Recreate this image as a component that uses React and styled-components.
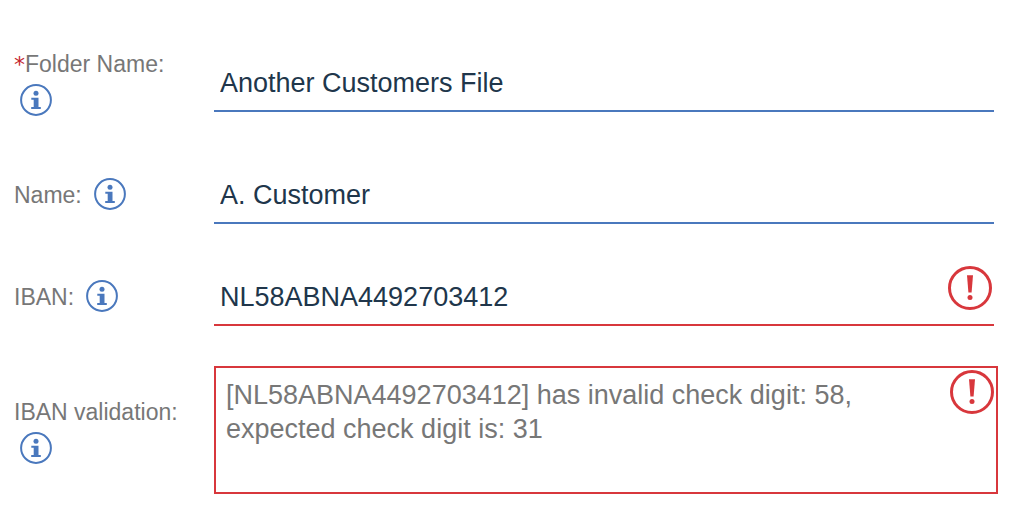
import React from "react";
import styled, { createGlobalStyle, css } from "styled-components";

const BLUE = "#4a78bd";
const RED = "#d8373c";

const GlobalStyle = createGlobalStyle`
  *, *::before, *::after { box-sizing: border-box; }
  body {
    margin: 0;
    background: #fff;
    font-family: "Helvetica Neue", "Liberation Sans", Arial, sans-serif;
  }
`;

const Form = styled.form`
  padding: 46px 34px 34px 14px;
`;

const Row = styled.div`
  display: grid;
  grid-template-columns: 200px 1fr;
  align-items: center;
  margin-bottom: ${(p) => p.$gap || 0}px;
`;

const LabelCell = styled.div`
  display: flex;
  flex-wrap: wrap;
  align-items: center;
  row-gap: 2px;
  padding: ${(p) => (p.$stacked ? "0 12px 2px 0" : "0 12px 0 0")};
`;

const Label = styled.label`
  padding: ${(p) => (p.$stacked ? "0 6px 0 0" : "2px 6px 0 0")};
  color: #777;
  font-size: 23px;
  line-height: 36px;
  white-space: nowrap;
`;

const Required = styled.span`
  color: #c4262e;
  font-family: "DejaVu Sans", sans-serif;
  font-size: 22px;
  line-height: 1;
`;

const InfoButton = styled.button`
  width: 32px;
  height: 32px;
  margin: 0 6px;
  padding: 0;
  border: 0;
  background: none;
  cursor: pointer;

  svg { display: block; }
`;

const Control = styled.div`
  position: relative;
  margin-right: ${(p) => (p.$wide ? 0 : 4)}px;
`;

const fieldText = css`
  display: block;
  width: 100%;
  margin: 0;
  border-radius: 0;
  outline: 0;
  background: transparent;
  font-family: inherit;
  font-size: 27px;
`;

const TextInput = styled.input`
  ${fieldText}
  height: 60px;
  padding: 4px 6px 0;
  border: 0;
  border-bottom: 2px solid ${(p) => (p.$invalid ? RED : BLUE)};
  color: #20364b;
`;

const Message = styled.textarea`
  ${fieldText}
  height: 128px;
  padding: 10px 56px 10px 10px;
  border: 2px solid ${RED};
  color: #777;
  line-height: 34px;
  resize: none;
  overflow: hidden;
`;

const ErrorMark = styled.svg`
  position: absolute;
  top: ${(p) => (p.$inset ? 4 : 0)}px;
  right: ${(p) => (p.$inset ? 4 : 2)}px;
  width: 44px;
  height: 44px;
  pointer-events: none;
`;

function Info({ about }) {
  return (
    <InfoButton type="button" aria-label={`About ${about}`}>
      <svg width="32" height="32" viewBox="0 0 32 32" aria-hidden="true">
        <circle cx="16" cy="16" r="14.9" fill="none" stroke={BLUE} strokeWidth="2" />
        <circle cx="16" cy="9.2" r="2.5" fill={BLUE} />
        <path d="M11.3 13.7H18.5V23H20.8V25.1H11.2V23H13.7V15.8H11.3Z" fill={BLUE} />
      </svg>
    </InfoButton>
  );
}

function ErrorIcon({ inset }) {
  return (
    <ErrorMark viewBox="0 0 44 44" $inset={inset} role="img" aria-label="Error">
      <circle cx="22" cy="22" r="20.5" fill="none" stroke={RED} strokeWidth="3" />
      <path d="M19 9.2H25L23.6 26.4H20.4Z" fill={RED} />
      <circle cx="22" cy="31.5" r="2.5" fill={RED} />
    </ErrorMark>
  );
}

function FieldLabel({ id, text, required, stacked }) {
  return (
    <LabelCell $stacked={stacked}>
      <Label htmlFor={id} $stacked={stacked}>
        {required && <Required>*</Required>}
        {text}:
      </Label>
      <Info about={text} />
    </LabelCell>
  );
}

export default function App() {
  return (
    <>
      <GlobalStyle />
      <Form>
        <Row $gap={46}>
          <FieldLabel id="folder" text="Folder Name" required stacked />
          <Control>
            <TextInput id="folder" type="text" defaultValue="Another Customers File" required />
          </Control>
        </Row>
        <Row $gap={42}>
          <FieldLabel id="name" text="Name" />
          <Control>
            <TextInput id="name" type="text" defaultValue="A. Customer" />
          </Control>
        </Row>
        <Row $gap={40}>
          <FieldLabel id="iban" text="IBAN" />
          <Control>
            <TextInput id="iban" type="text" defaultValue="NL58ABNA4492703412" $invalid aria-invalid="true" />
            <ErrorIcon />
          </Control>
        </Row>
        <Row>
          <FieldLabel id="validation" text="IBAN validation" stacked />
          <Control $wide>
            <Message
              id="validation"
              readOnly
              value="[NL58ABNA4492703412] has invalid check digit: 58, expected check digit is: 31"
            />
            <ErrorIcon inset />
          </Control>
        </Row>
      </Form>
    </>
  );
}
